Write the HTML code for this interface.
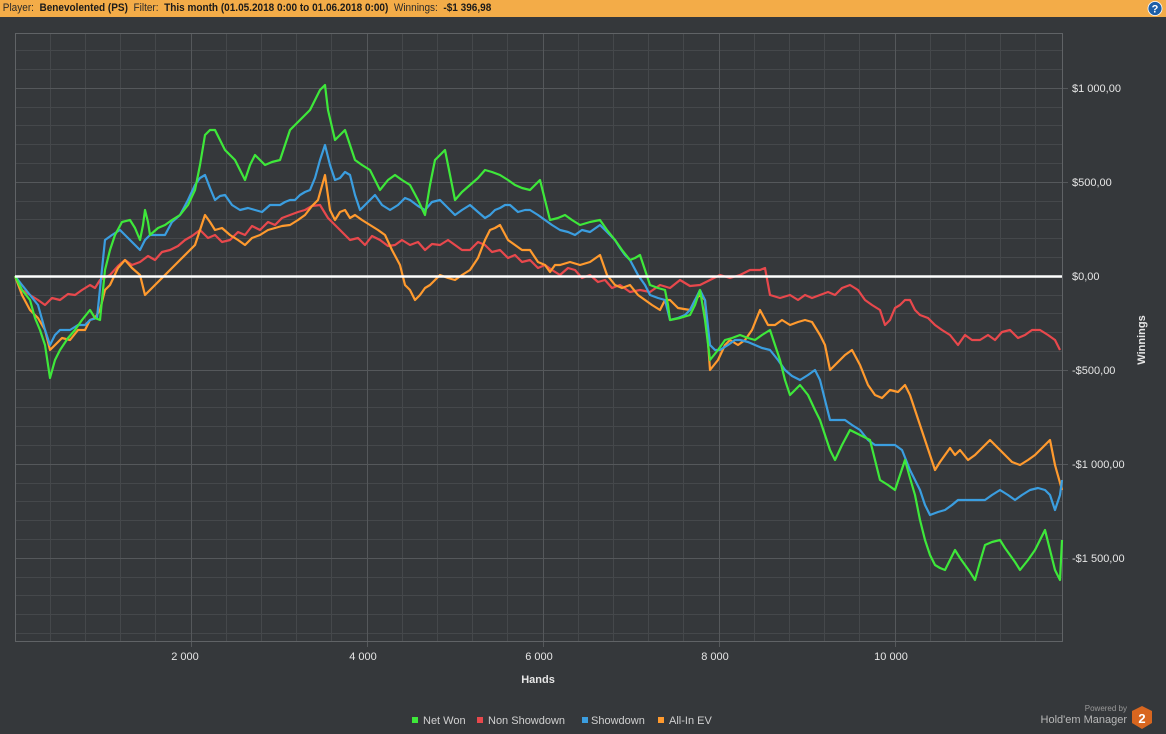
<!DOCTYPE html>
<html><head><meta charset="utf-8"><style>
html,body{margin:0;padding:0;width:1166px;height:734px;background:#35383b;overflow:hidden;font-family:"Liberation Sans","DejaVu Sans",sans-serif}
.hdr{position:absolute;left:0;top:0;width:1166px;height:17px;background:#f3ac48}
.hdr span{display:block;font-size:11px;line-height:17px;color:#2a2a2a;white-space:nowrap;transform:scaleX(0.91);transform-origin:0 0}
.hdr b{font-weight:bold;color:#1a1a1a}
</style></head><body>
<div class="hdr"><span>&nbsp;Player:&nbsp; <b>Benevolented (PS)</b>&nbsp; Filter:&nbsp; <b>This month (01.05.2018 0:00 to 01.06.2018 0:00)</b>&nbsp; Winnings:&nbsp; <b>-$1 396,98</b></span></div>
<svg width="1166" height="734" style="position:absolute;left:0;top:0" xmlns="http://www.w3.org/2000/svg">
<circle cx="1155" cy="8.5" r="7" fill="#1d5fa8" stroke="#fff" stroke-width="0.8"/>
<text x="1155" y="12.5" font-size="11" font-weight="bold" fill="#fff" text-anchor="middle" font-family="Liberation Sans">?</text>
<g stroke="#45484b" stroke-width="1">
<path d="M50.5 33V641M85.5 33V641M120.5 33V641M155.5 33V641M226.5 33V641M261.5 33V641M296.5 33V641M331.5 33V641M402.5 33V641M437.5 33V641M472.5 33V641M507.5 33V641M578.5 33V641M613.5 33V641M648.5 33V641M683.5 33V641M754.5 33V641M789.5 33V641M824.5 33V641M859.5 33V641M930.5 33V641M965.5 33V641M1000.5 33V641M1035.5 33V641"/>
<path d="M15 50.5H1062M15 69.5H1062M15 107.5H1062M15 125.5H1062M15 144.5H1062M15 163.5H1062M15 201.5H1062M15 219.5H1062M15 238.5H1062M15 257.5H1062M15 295.5H1062M15 313.5H1062M15 332.5H1062M15 351.5H1062M15 389.5H1062M15 407.5H1062M15 426.5H1062M15 445.5H1062M15 483.5H1062M15 501.5H1062M15 520.5H1062M15 539.5H1062M15 577.5H1062M15 595.5H1062M15 614.5H1062M15 633.5H1062"/>
</g>
<g stroke="#55585b" stroke-width="1">
<path d="M191.5 33V647M367.5 33V647M543.5 33V647M719.5 33V647M895.5 33V647"/>
<path d="M15 88.5H1068M15 182.5H1068M15 370.5H1068M15 464.5H1068M15 558.5H1068"/>
</g>
<rect x="15.5" y="33.5" width="1047" height="608" fill="none" stroke="#606366"/>
<g fill="none" stroke-width="2.2" stroke-linejoin="round">
<polyline stroke="#e8484c" points="15,276 22,290 30,295 38,300 45,305 52,298 60,300 68,294 75,295 82,290 90,285 95,288 100,280 110,275 118,266 125,260 132,265 140,262 148,256 155,260 162,252 170,250 178,246 185,240 192,236 200,230 208,238 215,235 222,242 230,240 238,232 245,235 252,226 260,230 268,222 275,225 282,218 290,215 298,212 305,210 312,206 320,205 328,218 335,225 342,232 350,240 358,238 365,245 372,236 380,240 388,246 395,245 402,240 410,245 418,242 425,250 432,244 440,245 448,240 455,245 462,250 470,250 478,242 485,245 492,252 500,250 508,258 515,255 522,262 530,260 538,268 545,265 552,270 560,275 568,268 575,270 582,278 590,275 598,282 605,280 612,288 620,285 630,292 640,290 650,292 660,285 670,288 680,280 690,286 700,285 710,280 720,275 730,278 740,275 750,270 760,270 765,268 770,295 780,298 790,295 798,300 805,295 812,298 820,295 828,292 835,295 842,288 850,285 858,290 865,300 872,305 880,310 885,325 890,320 895,308 900,305 905,300 910,300 915,310 920,315 928,318 935,325 942,330 950,335 958,345 965,335 972,340 980,340 988,335 995,340 1002,332 1010,330 1018,338 1025,335 1032,330 1040,330 1048,335 1055,340 1060,350"/>
<polyline stroke="#ff9a2e" points="15,276 22,295 30,310 38,318 45,330 50,350 55,345 62,338 70,340 78,330 85,330 90,320 95,318 100,310 105,290 110,285 118,268 125,260 132,268 140,275 145,295 150,290 158,282 165,275 172,268 180,260 188,252 195,245 200,230 205,215 210,222 215,230 222,228 230,235 238,240 245,245 252,238 260,235 268,230 275,228 282,226 290,225 298,220 305,215 312,206 318,200 325,175 330,210 335,220 340,212 345,210 350,218 355,215 362,220 370,225 378,230 385,235 392,250 400,265 405,285 410,290 415,300 420,295 425,288 430,285 435,280 440,275 448,278 455,280 462,275 470,270 478,258 485,240 490,230 495,228 500,225 508,240 515,245 522,250 530,250 538,262 545,265 550,272 555,265 560,265 570,262 580,265 590,262 600,255 607,275 615,285 622,288 630,285 638,295 645,300 652,305 660,310 665,300 670,300 678,308 690,310 695,300 700,295 705,300 710,370 718,360 725,345 730,340 738,345 745,340 752,330 760,310 768,325 775,325 782,320 790,325 798,322 805,320 812,322 820,335 825,345 830,370 838,362 845,355 852,350 860,365 868,385 875,395 882,398 890,390 898,392 905,385 910,395 915,410 920,425 925,440 930,455 935,470 940,462 945,455 950,448 955,455 960,450 968,460 975,455 982,448 990,440 998,448 1005,455 1012,462 1020,465 1028,460 1035,455 1042,448 1050,440 1055,465 1062,490"/>
<polyline stroke="#3b9ee0" points="15,276 22,285 30,295 38,305 45,330 50,345 55,335 60,330 65,330 70,330 78,325 85,325 90,320 97,318 105,240 112,235 120,230 128,238 135,245 140,250 145,240 150,235 158,235 165,235 172,222 180,215 188,200 195,185 200,178 205,175 210,188 215,200 220,196 225,195 232,205 240,210 248,208 255,210 262,212 270,205 280,205 285,202 290,200 295,200 300,195 305,192 310,190 315,178 320,160 325,145 330,165 335,180 340,178 345,172 350,175 355,195 360,210 368,202 375,195 382,205 390,210 398,205 405,198 410,200 418,206 425,210 432,202 440,200 448,208 455,215 462,210 470,205 478,212 485,218 490,215 495,210 500,208 505,205 510,205 518,212 525,210 530,210 538,215 545,220 552,225 560,230 568,232 575,235 582,230 590,232 600,225 605,230 610,235 615,240 620,248 625,255 630,260 638,275 645,285 650,295 658,298 665,300 670,320 678,318 685,315 690,310 695,300 700,290 705,300 710,345 715,350 720,350 728,345 735,340 740,340 748,342 755,345 762,348 770,350 778,360 785,370 792,376 800,380 808,375 815,370 820,380 825,400 830,420 838,420 845,420 852,425 860,430 868,440 875,445 885,445 895,445 902,450 910,470 915,480 920,490 925,505 930,515 938,512 945,510 952,505 958,500 965,500 975,500 985,500 992,495 1000,490 1008,495 1015,500 1022,495 1030,490 1038,488 1045,490 1050,495 1055,510 1060,495 1062,480"/>
<polyline stroke="#3ee83a" points="15,276 22,290 30,300 35,318 40,330 45,345 50,378 55,360 60,350 68,338 75,330 82,320 90,310 95,318 100,320 103,290 105,270 110,250 115,235 122,222 130,220 135,228 140,240 143,225 145,210 148,222 150,235 158,228 165,225 172,220 180,215 188,205 195,190 200,165 205,135 210,130 215,130 220,140 225,150 230,155 235,160 240,170 245,180 250,165 255,155 260,160 265,165 272,162 280,160 285,145 290,130 295,125 300,120 305,115 310,110 315,100 320,90 325,85 328,110 335,140 340,135 345,130 350,145 355,160 362,165 370,170 375,180 380,190 388,180 395,175 402,180 410,185 418,200 425,215 430,185 435,160 440,155 445,150 450,175 455,200 462,192 470,185 478,178 485,170 492,172 500,175 508,180 515,185 522,188 530,190 535,185 540,180 545,200 550,220 558,218 565,215 572,220 580,225 590,222 600,220 607,230 615,240 622,250 630,260 635,258 640,255 645,270 650,285 658,288 665,290 668,305 670,320 680,318 690,315 695,305 700,290 705,320 710,360 718,350 725,340 732,338 740,335 748,338 755,340 762,335 770,330 775,345 780,360 785,380 790,395 795,390 800,385 808,395 815,410 820,420 825,435 830,450 835,460 842,445 850,430 860,435 870,440 875,460 880,480 888,485 895,490 900,475 905,460 910,478 915,495 920,520 925,540 930,555 935,565 940,568 945,570 950,560 955,550 960,558 965,565 970,572 975,580 980,562 985,545 992,542 1000,540 1005,548 1010,555 1015,562 1020,570 1028,560 1035,550 1040,540 1045,530 1050,550 1055,570 1060,580 1062,540"/>
</g>
<line x1="15" y1="276.5" x2="1062" y2="276.5" stroke="#ffffff" stroke-width="2.5"/>
<g font-size="11" fill="#e6e6e6" font-family="Liberation Sans">
<text x="1072" y="92">$1 000,00</text>
<text x="1072" y="186">$500,00</text>
<text x="1072" y="280">$0,00</text>
<text x="1072" y="374">-$500,00</text>
<text x="1072" y="468">-$1 000,00</text>
<text x="1072" y="562">-$1 500,00</text>
<g text-anchor="middle">
<text x="185" y="660">2 000</text>
<text x="363" y="660">4 000</text>
<text x="539" y="660">6 000</text>
<text x="715" y="660">8 000</text>
<text x="891" y="660">10 000</text>
</g>
<text x="538" y="683" text-anchor="middle" font-weight="bold">Hands</text>
<text transform="translate(1145,340) rotate(-90)" text-anchor="middle" font-weight="bold">Winnings</text>
</g>
<g font-size="11" fill="#d0d0d0" font-family="Liberation Sans">
<rect x="412" y="717" width="6" height="6" fill="#3ee83a"/><text x="423" y="724">Net Won</text>
<rect x="477" y="717" width="6" height="6" fill="#e8484c"/><text x="488" y="724">Non Showdown</text>
<rect x="582" y="717" width="6" height="6" fill="#3b9ee0"/><text x="591" y="724">Showdown</text>
<rect x="658" y="717" width="6" height="6" fill="#ff9a2e"/><text x="669" y="724">All-In EV</text>
<text x="1127" y="711" font-size="8" fill="#9a9a9a" text-anchor="end">Powered by</text>
<text x="1127" y="723" font-size="11" fill="#b8b8b8" text-anchor="end">Hold'em Manager</text>
</g>
<polygon points="1142,706 1152,711 1152,723 1142,729 1132,723 1132,711" fill="#d8661f"/>
<text x="1142" y="723" font-size="13" font-weight="bold" fill="#fff" text-anchor="middle" font-family="Liberation Sans">2</text>
</svg>
</body></html>
